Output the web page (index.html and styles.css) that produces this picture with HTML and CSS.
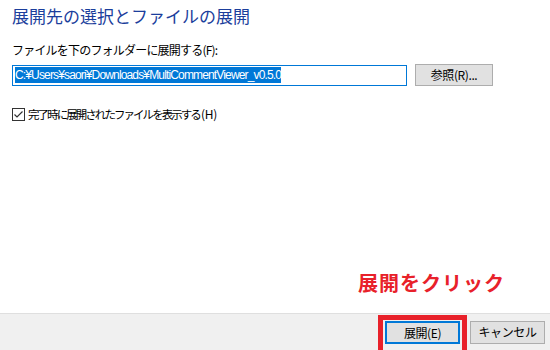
FILE: index.html
```html
<!DOCTYPE html>
<html lang="ja">
<head>
    <meta charset="UTF-8">
    <title>展開先の選択とファイルの展開</title>
    <link rel="stylesheet" href="styles.css">
</head>
<body>
    <div class="dialog">
        <div class="main">
            <h1 class="title">展開先の選択とファイルの展開</h1>
            <label class="label">ファイルを下のフォルダーに展開する(F):</label>
            <div class="path-row">
                <div class="path-input"><span class="selected">C:¥Users¥saori¥Downloads¥MultiCommentViewer_v0.5.0</span></div>
                <button class="btn browse">参照(R)...</button>
            </div>
            <div class="check-row">
                <span class="checkbox">
                    <svg width="13" height="13" viewBox="0 0 13 13">
                        <rect x="0.5" y="0.5" width="12" height="12" fill="#fff" stroke="#333"/>
                        <path d="M2.5 6.5 L5 9 L10.5 3.5" fill="none" stroke="#333" stroke-width="1.2"/>
                    </svg>
                </span>
                <span class="check-text">完了時に展開されたファイルを表示する<span class="key">(H)</span></span>
            </div>
        </div>
        <div class="note">展開をクリック</div>
        <div class="footer">
            <div class="mark">
                <button class="btn primary">展開(E)</button>
            </div>
            <button class="btn cancel">キャンセル</button>
        </div>
    </div>
</body>
</html>
```

FILE: styles.css
```css
* {
    margin: 0;
    padding: 0;
    box-sizing: border-box;
}

body {
    width: 550px;
    height: 350px;
    background-color: #fff;
    overflow: hidden;
    font-family: "Noto Sans CJK JP", "Liberation Sans", sans-serif;
    font-size: 12px;
    color: #000;
}

.dialog {
    position: relative;
    width: 550px;
    height: 350px;
    display: flex;
    flex-direction: column;
}

.main {
    flex-grow: 1;
    padding: 4px 12px 0 12px;
}

.title {
    font-size: 17px;
    font-weight: normal;
    line-height: 23px;
    color: #1b3e9c;
}

.label {
    display: block;
    margin-top: 15px;
    line-height: 16px;
    letter-spacing: -0.8px;
}

.path-row {
    display: flex;
    align-items: center;
    margin-top: 6px;
}

.path-input {
    width: 395px;
    height: 21px;
    border: 1px solid #0078d7;
    padding: 1px 2px;
    display: flex;
    align-items: center;
}

.selected {
    background: #0078d7;
    color: #fff;
    line-height: 16px;
    font-family: "Liberation Sans", sans-serif;
    font-size: 12px;
    letter-spacing: -0.85px;
}

.btn {
    font-family: "Noto Sans CJK JP", "Liberation Sans", sans-serif;
    font-size: 12px;
    width: 75px;
    height: 23px;
    background: #e1e1e1;
    border: 1px solid #adadad;
    color: #000;
    line-height: 20px;
    letter-spacing: -0.4px;
}

.browse {
    width: 78px;
    height: 22px;
    margin-left: 8px;
}

.check-row {
    display: flex;
    align-items: center;
    gap: 3px;
    margin-top: 20px;
    line-height: 16px;
}

.check-text {
    font-size: 11.5px;
    letter-spacing: -1.95px;
}

.check-text .key {
    font-size: 12px;
    letter-spacing: -0.2px;
    margin-left: 1px;
}

.checkbox {
    display: flex;
}

.note {
    position: absolute;
    left: 358px;
    top: 269px;
    color: #e8212a;
    font-size: 20px;
    font-weight: bold;
    line-height: 28px;
    letter-spacing: 1px;
}

.footer {
    height: 37px;
    background: #f0f0f0;
    border-top: 1px solid #dfdfdf;
    display: flex;
    justify-content: flex-end;
    align-items: center;
    padding-right: 5px;
    gap: 10px;
}

.mark {
    position: relative;
    display: flex;
}

.mark::after {
    content: "";
    position: absolute;
    left: -7px;
    top: -6px;
    right: -7px;
    bottom: -14px;
    border: 5px solid #e8212a;
}

.primary {
    border: 2px solid #0078d7;
}
```
